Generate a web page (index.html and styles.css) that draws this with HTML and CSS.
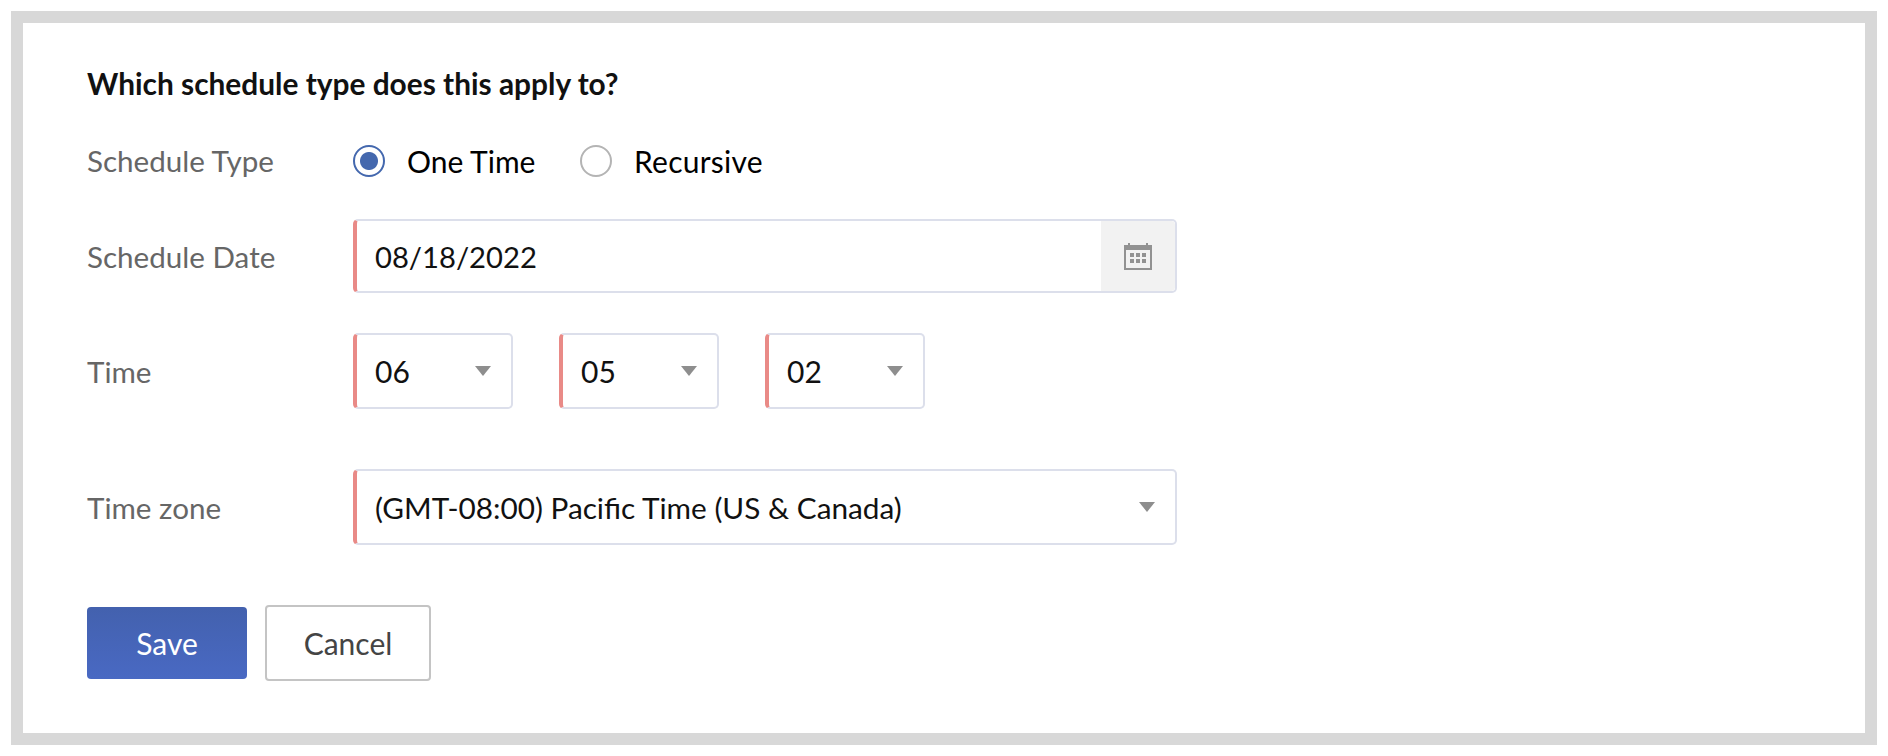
FILE: index.html
```html
<!DOCTYPE html>
<html lang="en">
<head>
<meta charset="utf-8">
<title>Schedule</title>
<link rel="stylesheet" href="styles.css">
</head>
<body>
<main class="frame">
  <h1 class="title">Which schedule type does this apply to?</h1>
  <div class="row row-type">
    <span class="label">Schedule Type</span>
    <div class="radios">
      <span class="radio radio-on"></span><span class="radio-text">One Time</span>
      <span class="radio radio-off"></span><span class="radio-text radio-text-last">Recursive</span>
    </div>
  </div>
  <div class="row row-date">
    <span class="label">Schedule Date</span>
    <div class="field field-date">
      <span class="value">08/18/2022</span>
      <span class="cal">
        <svg class="cal-icon" width="28" height="28" viewBox="0 0 28 28">
          <path fill="#929292" d="M4 1h2v2h16V1h2v2h4v25H0V3h4zM2 8v18h24V8z"/>
          <path fill="#929292" d="M6 11h4v4H6zM12 11h4v4h-4zM18 11h4v4h-4zM6 17h4v4H6zM12 17h4v4h-4zM18 17h4v4h-4z"/>
        </svg>
      </span>
    </div>
  </div>
  <div class="row row-time">
    <span class="label">Time</span>
    <div class="times">
      <div class="field field-time"><span class="value">06</span><span class="arrow"></span></div>
      <div class="field field-time"><span class="value">05</span><span class="arrow"></span></div>
      <div class="field field-time"><span class="value">02</span><span class="arrow"></span></div>
    </div>
  </div>
  <div class="row row-zone">
    <span class="label">Time zone</span>
    <div class="field field-zone"><span class="value">(GMT-08:00) Pacific Time (US &amp; Canada)</span><span class="arrow"></span></div>
  </div>
  <div class="actions">
    <button class="btn btn-save" type="button">Save</button>
    <button class="btn btn-cancel" type="button">Cancel</button>
  </div>
</main>
</body>
</html>
```
FILE: styles.css
```css
* { box-sizing: border-box; }
html, body { margin: 0; padding: 0; background: #fff; }
body { font-family: Lato, "Liberation Sans", sans-serif; overflow: hidden; }

.frame {
  margin: 11px;
  width: 1866px;
  height: 734px;
  border: 12px solid #d8d8d8;
  background: #fff;
  padding: 41px 0 0 64px;
}
.title {
  margin: 0;
  height: 40px;
  line-height: 40px;
  font-size: 29.85px;
  font-weight: 700;
  color: #111;
}
.row { display: flex; align-items: center; }
.row-type { margin-top: 41px; height: 32px; }
.row-type .label { padding-bottom: 2px; }
.row-date { margin-top: 42px; height: 74px; }
.row-time { margin-top: 40px; height: 76px; }
.row-zone { margin-top: 60px; height: 76px; }
.label { width: 266px; flex: none; font-size: 29.6px; color: #666; }

.radios { display: flex; align-items: center; }
.radio { width: 32px; height: 32px; border-radius: 50%; flex: none; }
.radio-on { border: 2px solid #4468ae; background: radial-gradient(circle, #4468ae 0 8.5px, #fff 9.5px); }
.radio-off { border: 2px solid #b4b4b4; background: #fff; }
.radio-text { font-size: 30px; color: #000; margin-left: 22px; width: 173px; }
.radio-text-last { letter-spacing: 0.25px; }

.field {
  display: flex;
  align-items: center;
  height: 100%;
  background: #fff;
  border: 2px solid #dcdfeb;
  border-left: 4px solid #e98a87;
  border-radius: 5px;
  font-size: 30px;
  color: #111;
  padding-left: 18px;
}
.field-date, .field-zone { width: 824px; }
.field-zone { font-size: 29.75px; }
.value { flex: 1; }
.field-date .value { font-size: 29.2px; }
.cal {
  width: 74px;
  align-self: stretch;
  background: #f2f2f2;
  display: flex;
  align-items: center;
  justify-content: center;
  border-radius: 0 4px 4px 0;
}
.cal-icon { display: block; }
.times { display: flex; gap: 46px; height: 100%; }
.field-time { width: 160px; }
.arrow {
  flex: none;
  width: 0;
  height: 0;
  border-left: 8px solid transparent;
  border-right: 8px solid transparent;
  border-top: 10px solid #8e8e8e;
  margin: -1px 20px 0 0;
}
.actions { display: flex; align-items: center; gap: 18px; margin-top: 60px; height: 76px; }
.btn { font-family: inherit; font-size: 30px; cursor: pointer; padding: 0; }
.btn-save {
  width: 160px;
  height: 72px;
  border: 0;
  border-radius: 4px;
  color: #fff;
  background: linear-gradient(#4361ae, #4969c3);
}
.btn-cancel {
  width: 166px;
  height: 76px;
  background: #fff;
  color: #444;
  border: 2px solid #c4c4c4;
  border-radius: 4px;
}
```
